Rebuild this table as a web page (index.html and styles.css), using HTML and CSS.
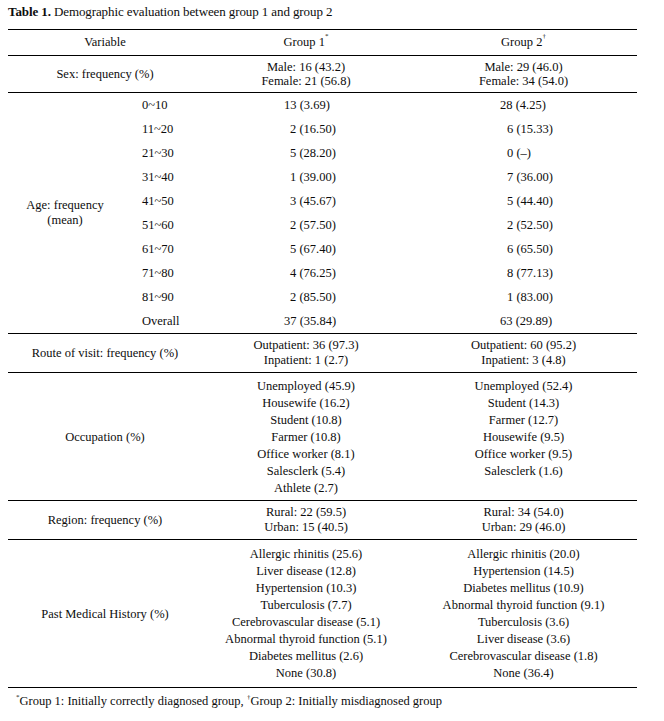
FILE: index.html
```html
<!DOCTYPE html>
<html lang="en">
<head>
<meta charset="utf-8">
<title>Table 1</title>
<link rel="stylesheet" href="styles.css">
</head>
<body>
<div class="page">
  <p class="caption"><b>Table 1.</b> Demographic evaluation between group 1 and group 2</p>
  <table class="data">
    <colgroup>
      <col class="c-var">
      <col class="c-sub">
      <col class="c-g1">
      <col class="c-g2">
    </colgroup>
    <thead>
      <tr class="r-head">
        <th colspan="2">Variable</th>
        <th>Group 1<sup>*</sup></th>
        <th>Group 2<sup>†</sup></th>
      </tr>
    </thead>
    <tbody>
      <tr class="r-sex">
        <td colspan="2">Sex: frequency (%)</td>
        <td>Male: 16 (43.2)<br>Female: 21 (56.8)</td>
        <td>Male: 29 (46.0)<br>Female: 34 (54.0)</td>
      </tr>
      <tr class="r-age first">
        <td rowspan="10" class="age-label">Age: frequency<br>(mean)</td>
        <td class="range">0~10</td>
        <td class="v1">13 (3.69)</td>
        <td class="v2">28 (4.25)</td>
      </tr>
      <tr class="r-age"><td class="range">11~20</td><td class="v1 one">2 (16.50)</td><td class="v2 one">6 (15.33)</td></tr>
      <tr class="r-age"><td class="range">21~30</td><td class="v1 one">5 (28.20)</td><td class="v2 one">0 (–)</td></tr>
      <tr class="r-age"><td class="range">31~40</td><td class="v1 one">1 (39.00)</td><td class="v2 one">7 (36.00)</td></tr>
      <tr class="r-age"><td class="range">41~50</td><td class="v1 one">3 (45.67)</td><td class="v2 one">5 (44.40)</td></tr>
      <tr class="r-age"><td class="range">51~60</td><td class="v1 one">2 (57.50)</td><td class="v2 one">2 (52.50)</td></tr>
      <tr class="r-age"><td class="range">61~70</td><td class="v1 one">5 (67.40)</td><td class="v2 one">6 (65.50)</td></tr>
      <tr class="r-age"><td class="range">71~80</td><td class="v1 one">4 (76.25)</td><td class="v2 one">8 (77.13)</td></tr>
      <tr class="r-age"><td class="range">81~90</td><td class="v1 one">2 (85.50)</td><td class="v2 one">1 (83.00)</td></tr>
      <tr class="r-age last"><td class="range">Overall</td><td class="v1">37 (35.84)</td><td class="v2">63 (29.89)</td></tr>
      <tr class="r-route">
        <td colspan="2">Route of visit: frequency (%)</td>
        <td>Outpatient: 36 (97.3)<br>Inpatient: 1 (2.7)</td>
        <td>Outpatient: 60 (95.2)<br>Inpatient: 3 (4.8)</td>
      </tr>
      <tr class="r-list r-occ">
        <td colspan="2">Occupation (%)</td>
        <td>Unemployed (45.9)<br>Housewife (16.2)<br>Student (10.8)<br>Farmer (10.8)<br>Office worker (8.1)<br>Salesclerk (5.4)<br>Athlete (2.7)</td>
        <td class="top">Unemployed (52.4)<br>Student (14.3)<br>Farmer (12.7)<br>Housewife (9.5)<br>Office worker (9.5)<br>Salesclerk (1.6)</td>
      </tr>
      <tr class="r-region">
        <td colspan="2">Region: frequency (%)</td>
        <td>Rural: 22 (59.5)<br>Urban: 15 (40.5)</td>
        <td>Rural: 34 (54.0)<br>Urban: 29 (46.0)</td>
      </tr>
      <tr class="r-list r-pmh">
        <td colspan="2">Past Medical History (%)</td>
        <td>Allergic rhinitis (25.6)<br>Liver disease (12.8)<br>Hypertension (10.3)<br>Tuberculosis (7.7)<br>Cerebrovascular disease (5.1)<br>Abnormal thyroid function (5.1)<br>Diabetes mellitus (2.6)<br>None (30.8)</td>
        <td>Allergic rhinitis (20.0)<br>Hypertension (14.5)<br>Diabetes mellitus (10.9)<br>Abnormal thyroid function (9.1)<br>Tuberculosis (3.6)<br>Liver disease (3.6)<br>Cerebrovascular disease (1.8)<br>None (36.4)</td>
      </tr>
    </tbody>
  </table>
  <p class="footnote"><sup>*</sup>Group 1: Initially correctly diagnosed group, <sup>†</sup>Group 2: Initially misdiagnosed group</p>
</div>
</body>
</html>
```

FILE: styles.css
```css
html, body {
  margin: 0;
  padding: 0;
  background: #ffffff;
}

body {
  font-family: "Liberation Serif", "Times New Roman", serif;
  color: #0d0d0d;
  font-size: 12.5px;
}

.page {
  padding: 4px 0 0 8px;
  width: 629px;
}

.caption {
  margin: 0 0 9px 0;
  font-size: 13px;
  line-height: 16px;
  letter-spacing: -0.1px;
}

.caption b {
  font-weight: bold;
}

.data {
  border-collapse: collapse;
  table-layout: fixed;
  width: 629px;
  border-top: 1px solid #000;
  border-bottom: 1px solid #000;
}

.c-var { width: 114px; }
.c-sub { width: 80px; }
.c-g1 { width: 208px; }
.c-g2 { width: 227px; }

.data th,
.data td {
  padding: 0;
  font-weight: normal;
  text-align: center;
  vertical-align: middle;
  white-space: nowrap;
}

.data sup {
  font-size: 7px;
  vertical-align: top;
  line-height: 7px;
  position: relative;
  top: -2px;
}

.r-head th {
  height: 25px;
  line-height: 15px;
  border-bottom: 1px solid #000;
}

.r-sex td {
  height: 28px;
  line-height: 14px;
  padding: 4px 0;
  border-bottom: 1px solid #000;
}

.r-age td {
  height: 24px;
  line-height: 15px;
}

.r-age .age-label {
  line-height: 15px;
  border-bottom: 1px solid #000;
}

.r-age .range {
  text-align: left;
  padding-left: 20px;
}

.r-age .v1 {
  text-align: left;
  padding-left: 82px;
}

.r-age .v2 {
  text-align: left;
  padding-left: 90px;
}

.r-age .v1.one { padding-left: 88px; }
.r-age .v2.one { padding-left: 97px; }

.r-age.last td {
  border-bottom: 1px solid #000;
}

.r-route td {
  line-height: 15px;
  padding: 4px 0;
  height: 30px;
  border-bottom: 1px solid #000;
}

.r-occ td {
  line-height: 17px;
  padding: 5px 0 3px 0;
  border-bottom: 1px solid #000;
}

.r-occ td.top {
  vertical-align: top;
}

.r-region td {
  line-height: 15px;
  padding: 4px 0;
  border-bottom: 1px solid #000;
}

.r-pmh td {
  line-height: 17px;
  padding: 6px 0 5px 0;
}

.footnote {
  margin: 6px 0 0 8px;
  font-size: 12.5px;
  line-height: 15px;
}

.footnote sup {
  font-size: 7px;
  vertical-align: top;
  line-height: 7px;
  position: relative;
  top: 0;
}
```
